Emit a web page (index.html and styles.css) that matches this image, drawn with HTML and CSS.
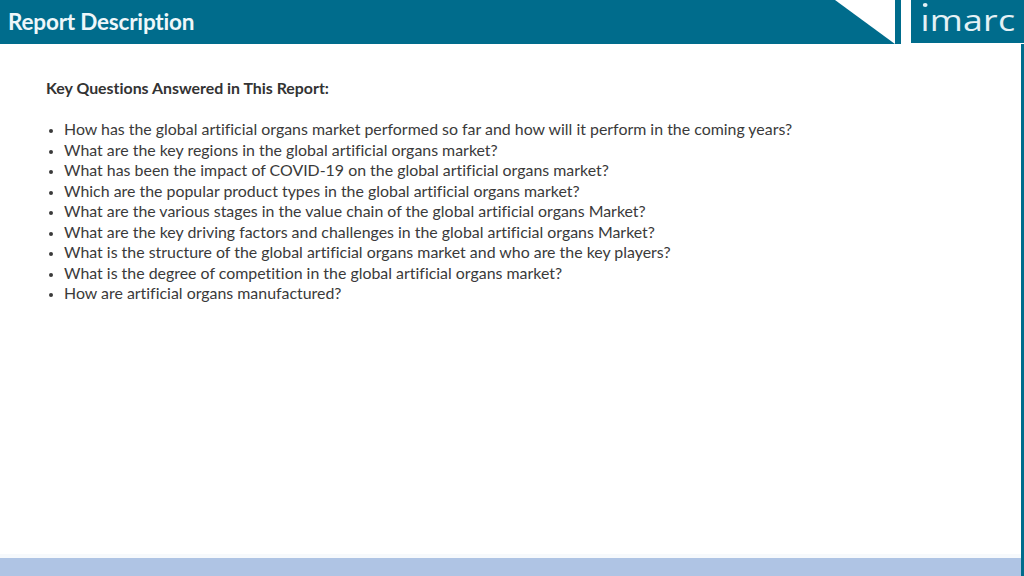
FILE: index.html
```html
<!DOCTYPE html>
<html lang="en">
<head>
<meta charset="utf-8">
<title>Report Description</title>
<link rel="stylesheet" href="styles.css">
</head>
<body>
<div class="slide">
  <header class="top">
    <div class="title-bar">
      <h1 class="title">Report Description</h1>
      <svg class="notch" width="60" height="44" viewBox="0 0 60 44"><polygon points="0,0 60,0 60,44" fill="#fff"/></svg>
    </div>
    <div class="sliver"></div>
    <div class="logo">
      <span class="logo-text"><span class="logo-i">i</span>marc</span>
    </div>
  </header>
  <div class="middle">
    <main class="content">
      <h2 class="lead">Key Questions Answered in This Report:</h2>
      <ul class="questions">
        <li>How has the global artificial organs market performed so far and how will it perform in the coming years?</li>
        <li>What are the key regions in the global artificial organs market?</li>
        <li>What has been the impact of COVID-19 on the global artificial organs market?</li>
        <li>Which are the popular product types in the global artificial organs market?</li>
        <li>What are the various stages in the value chain of the global artificial organs Market?</li>
        <li>What are the key driving factors and challenges in the global artificial organs Market?</li>
        <li>What is the structure of the global artificial organs market and who are the key players?</li>
        <li>What is the degree of competition in the global artificial organs market?</li>
        <li>How are artificial organs manufactured?</li>
      </ul>
    </main>
    <div class="edge"></div>
  </div>
  <footer class="bottom"><div class="fade"></div><div class="band"></div><div class="edge"></div></footer>
</div>
</body>
</html>
```
FILE: styles.css
```css
* { box-sizing: border-box; }
html, body { margin: 0; padding: 0; }
body { background: #fff; font-family: Lato, "Open Sans", sans-serif; color: #3a3a3a; font-variant-ligatures: none; }
.slide { width: 1024px; height: 576px; display: flex; flex-direction: column; overflow: hidden; }
.top { height: 44px; display: flex; flex: none; }
.title-bar { width: 895px; background: #006c8c; display: flex; justify-content: space-between; }
.title { margin: 0; padding: 8px 0 0 8px; font-size: 22.5px; line-height: 27px; font-weight: 700; color: #eef7fa; letter-spacing: -0.2px; }
.notch { flex: none; }
.sliver { width: 6px; background: #006c8c; margin-right: 10px; }
.logo { width: 113px; height: 43px; background: #006c8c; display: flex; justify-content: center; }
.logo-text { position: relative; display: block; height: 39px; font-family: "Open Sans", sans-serif; font-weight: 400; font-size: 30px; line-height: 39px; color: #e4f1f5; letter-spacing: 0.2px; transform: scaleX(1.19); }
.logo-i { display: inline-block; clip-path: inset(14px 0 0 0); }
.logo-text::before { content: ""; position: absolute; left: 2px; top: 3px; width: 4px; height: 4px; border-radius: 50%; background: #e4f1f5; }
.middle { flex: 1; display: flex; min-height: 0; }
.content { flex: 1; padding: 34px 0 0 46px; }
.lead { margin: 0 0 21px; font-size: 15.9px; line-height: 20px; font-weight: 700; color: #333; }
.questions { margin: 0; padding: 0 0 0 18px; font-size: 15.92px; line-height: 20.5px; }
.questions li { white-space: nowrap; }
.questions li::marker { font-size: 13px; }
.edge { width: 3px; flex: none; background: #006c8c; }
.bottom { height: 22px; flex: none; position: relative; display: flex; flex-direction: column; }
.fade { height: 4px; background: #f6f9fc; }
.band { flex: 1; background: #afc4e4; }
.bottom .edge { position: absolute; top: 0; right: 0; bottom: 0; }
```
